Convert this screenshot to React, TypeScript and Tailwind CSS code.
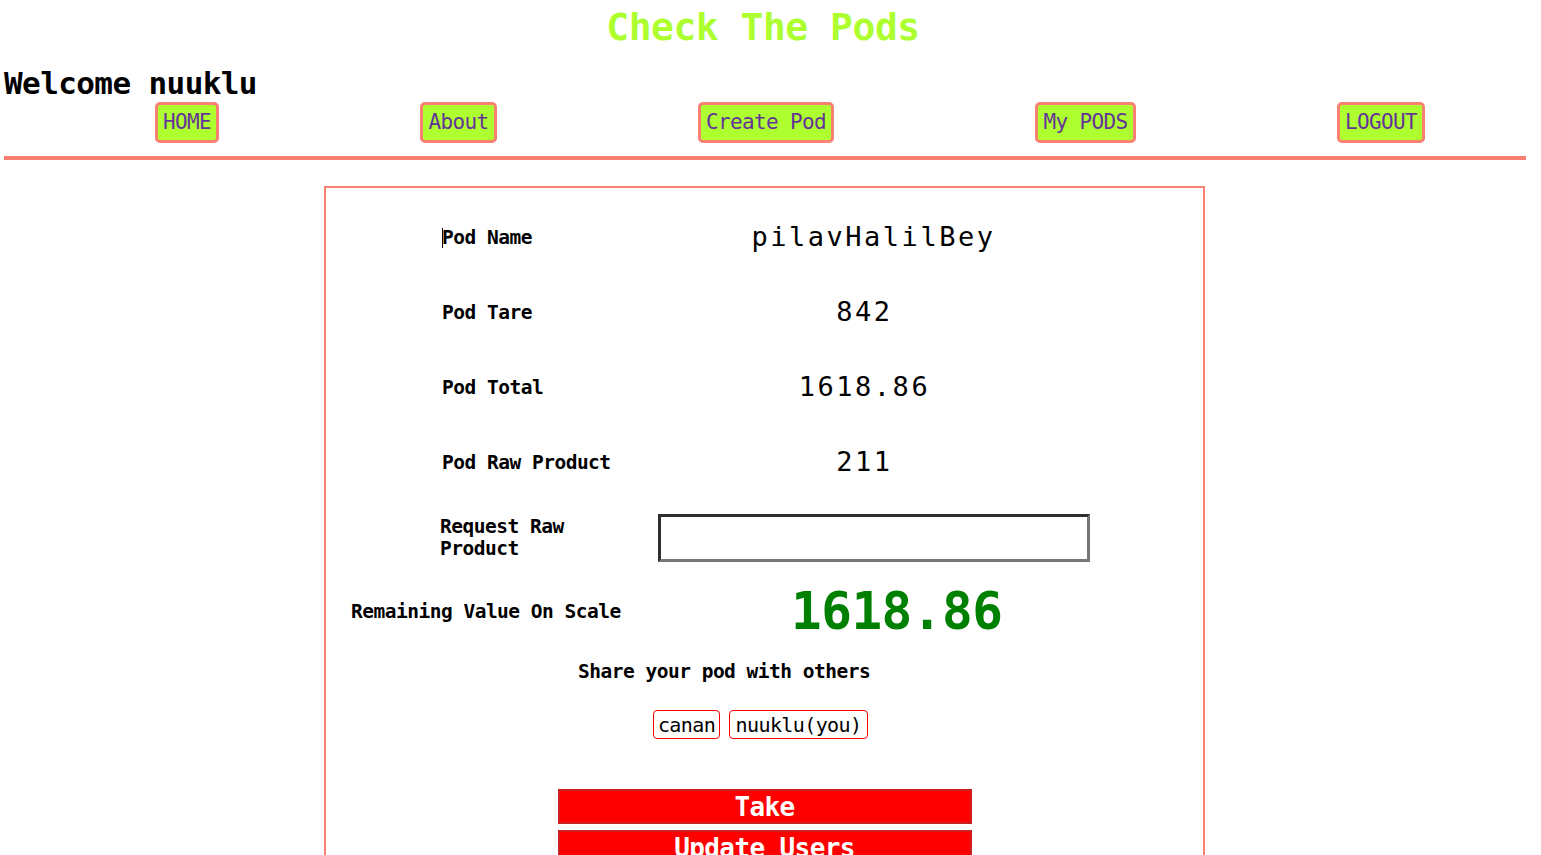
import React from "react";

const navItems = [
  { label: "HOME", w: "w-[64px]" },
  { label: "About", w: "w-[77px]" },
  { label: "Create Pod", w: "w-[136px]" },
  { label: "My PODS", w: "w-[101px]" },
  { label: "LOGOUT", w: "w-[88px]" },
];

const rows = [
  { label: "Pod Name", value: "pilavHalilBey", extra: "pl-[18px]" },
  { label: "Pod Tare", value: "842", extra: "" },
  { label: "Pod Total", value: "1618.86", extra: "" },
  { label: "Pod Raw Product", value: "211", extra: "" },
];

const label = "text-[19.5px] font-bold tracking-[-0.5px] text-black";

export default function App() {
  return (
    <div className="w-[1526px] min-h-screen bg-white font-['DejaVu_Sans_Mono',monospace]">
      {/* Header */}
      <h1 className="h-[55px] leading-[55px] text-center text-[38px] font-bold tracking-[-0.5px] text-[#adff2f]">
        Check The Pods
      </h1>
      <h2 className="mt-[9px] h-[38px] leading-[38px] pl-[4px] text-[31px] font-bold tracking-[-0.6px] text-black">
        Welcome nuuklu
      </h2>

      <nav className="flex gap-[201px] pl-[155px]">
        {navItems.map((item) => (
          <button
            key={item.label}
            className={`${item.w} h-[41px] flex items-center justify-center rounded-[5px] border-[3px] border-[#fa8072] bg-[#adff2f] text-[21px] tracking-[-0.64px] text-[#663399]`}
          >
            {item.label}
          </button>
        ))}
      </nav>

      <div className="mt-[13px] ml-[4px] w-[1522px] h-[4px] bg-[#fa8072]" />

      {/* Pod card */}
      <div className="mt-[26px] ml-[324px] w-[881px] h-[720px] border-2 border-b-0 border-[#fa8072] pt-[12px]">
        {rows.map((r, i) => (
          <div key={r.label} className="flex items-center h-[75px] pl-[116px]">
            <div className={`w-[200px] ${label} flex items-center`}>
              {i === 0 && <span className="inline-block w-px h-[20px] bg-black -mr-px" />}
              {r.label}
            </div>
            <div className={`w-[445px] text-center text-[27px] tracking-[2.5px] text-black ${r.extra}`}>
              {r.value}
            </div>
          </div>
        ))}

        <div className="flex items-center h-[76px] pl-[114px]">
          <div className={`w-[218px] ${label} leading-[22px]`}>
            Request Raw
            <br />
            Product
          </div>
          <input
            type="text"
            className="w-[432px] h-[48px] border-[3px] border-t-[#2e2e2e] border-l-[#2e2e2e] border-b-[#767676] border-r-[#767676] bg-white outline-none"
          />
        </div>

        <div className="flex items-center h-[72px] pl-[25px]">
          <div className={`w-[440px] ${label}`}>Remaining Value On Scale</div>
          <div className="text-[51px] font-bold tracking-[-0.5px] text-[#008000]">1618.86</div>
        </div>

        <div className={`h-[48px] flex items-center pl-[252px] ${label}`}>Share your pod with others</div>

        <div className="mt-[14px] flex gap-[9px] pl-[327px]">
          <span className="w-[67px] h-[29px] flex items-center justify-center rounded-[4px] border border-[#ff0000] text-[20px] tracking-[-0.6px] text-black">
            canan
          </span>
          <span className="w-[139px] h-[29px] flex items-center justify-center rounded-[4px] border border-[#ff0000] text-[20px] tracking-[-0.6px] text-black">
            nuuklu(you)
          </span>
        </div>

        <div className="mt-[50px] flex flex-col items-center gap-[6px]">
          <button className="w-[414px] h-[35px] border-2 border-[#cc1f1f] bg-[#ff0000] text-[26px] font-bold tracking-[-0.6px] text-white leading-none">
            Take
          </button>
          <button className="w-[414px] h-[35px] border-2 border-[#cc1f1f] bg-[#ff0000] text-[26px] font-bold tracking-[-0.6px] text-white leading-none">
            Update Users
          </button>
        </div>
      </div>
    </div>
  );
}
